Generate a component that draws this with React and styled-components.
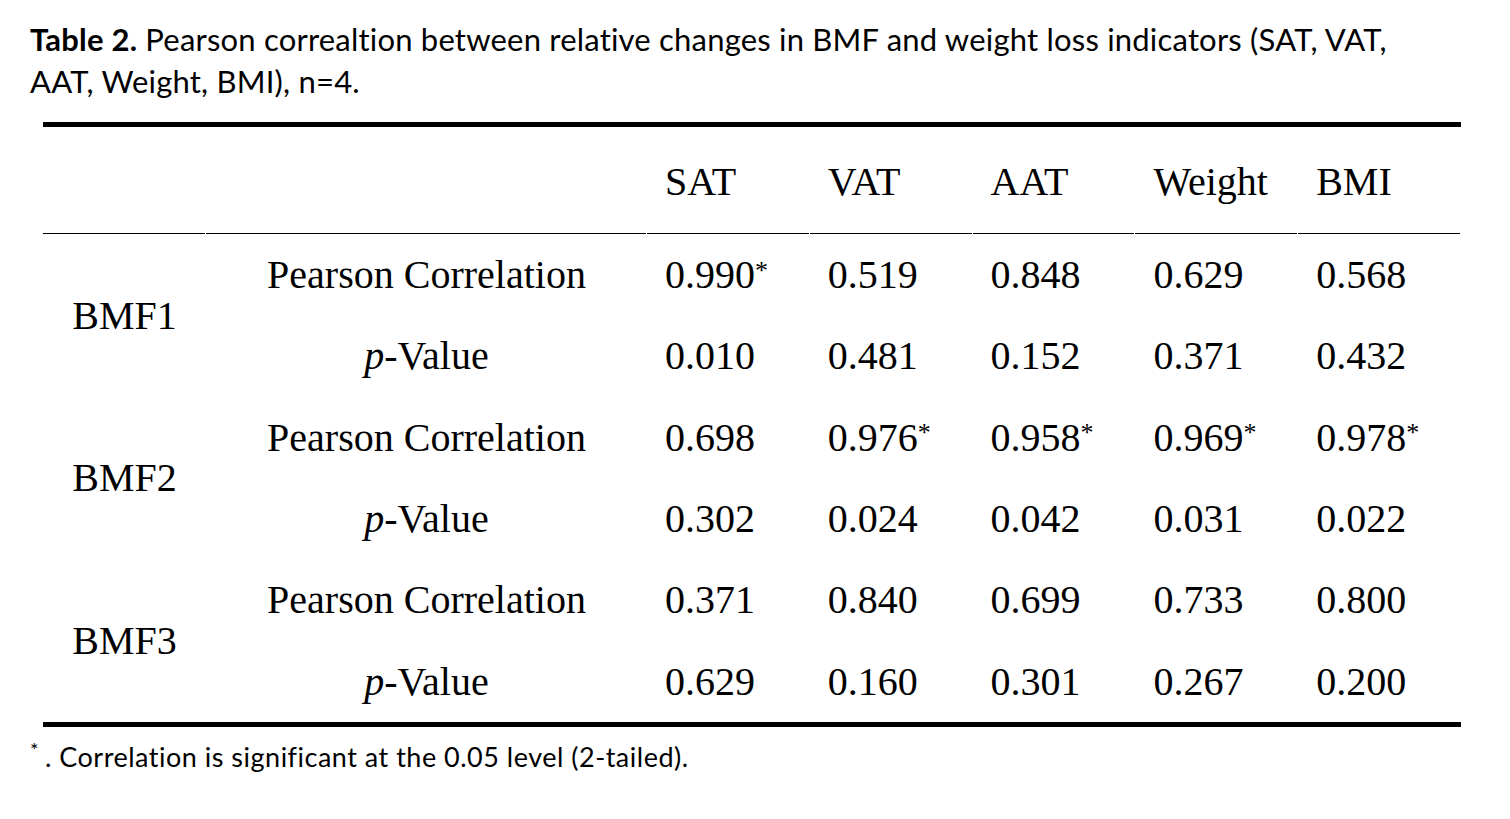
import React from 'react';
import styled, { createGlobalStyle } from 'styled-components';

const GlobalStyle = createGlobalStyle`
  body {
    margin: 0;
    background: #fff;
    color: #000;
  }
`

const PageSC = styled.div`
  width: 1510px;
  height: 819px;
  box-sizing: border-box;
  padding: 18px 0 0 30px;
`

const CaptionSC = styled.p`
  margin: 0;
  font-family: Lato, "Liberation Sans", sans-serif;
  font-size: 31px;
  line-height: 42px;
  letter-spacing: 0.2px;
`

const TableSC = styled.div`
  margin: 20px 0 0 13px;
  width: 1418px;
  display: grid;
  grid-template-columns: 163px 441px repeat(5, 1fr);
  border-top: 5px solid #000;
  border-bottom: 5px solid #000;
  font-family: "Liberation Serif", "Times New Roman", serif;
  font-size: 40px;
`

const HeadCellSC = styled.div`
  position: relative;
  height: 107px;
  display: flex;
  align-items: center;
  padding-left: 18px;
  padding-top: 2px;
  box-sizing: border-box;
  &::after {
    content: "";
    position: absolute;
    left: 0;
    right: 1px;
    bottom: 0;
    border-bottom: 1.5px solid #000;
  }
`

const GroupSC = styled.div`
  grid-row: span 2;
  display: flex;
  align-items: center;
  justify-content: center;
`

const LabelSC = styled.div`
  height: 81.3px;
  display: flex;
  align-items: center;
  justify-content: center;
`

const ValueSC = styled.div`
  height: 81.3px;
  display: flex;
  align-items: center;
  padding-left: 18px;
`

const StarSC = styled.sup`
  font-size: 26px;
  line-height: 0;
  position: relative;
  top: -4px;
`

const NoteSC = styled.p`
  margin: 10px 0 0;
  font-family: Lato, "Liberation Sans", sans-serif;
  font-size: 27px;
  letter-spacing: 0.5px;
  sup {
    font-size: 20px;
    vertical-align: 10px;
    margin-right: 6px;
  }
`

const headers = ["", "", "SAT", "VAT", "AAT", "Weight", "BMI"]

const groups = [
  {
    name: "BMF1",
    r: [["0.990", true], ["0.519"], ["0.848"], ["0.629"], ["0.568"]],
    p: ["0.010", "0.481", "0.152", "0.371", "0.432"],
  },
  {
    name: "BMF2",
    r: [["0.698"], ["0.976", true], ["0.958", true], ["0.969", true], ["0.978", true]],
    p: ["0.302", "0.024", "0.042", "0.031", "0.022"],
  },
  {
    name: "BMF3",
    r: [["0.371"], ["0.840"], ["0.699"], ["0.733"], ["0.800"]],
    p: ["0.629", "0.160", "0.301", "0.267", "0.200"],
  },
]

export default function App() {
  return (
    <PageSC>
      <GlobalStyle />
      <CaptionSC>
        <b>Table 2.</b> Pearson correaltion between relative changes in BMF and weight loss indicators (SAT, VAT,
        <br />
        AAT, Weight, BMI), n=4.
      </CaptionSC>
      <TableSC>
        {headers.map((h, i) => <HeadCellSC key={i}>{h}</HeadCellSC>)}
        {groups.map(g => (
          <React.Fragment key={g.name}>
            <GroupSC>{g.name}</GroupSC>
            <LabelSC>Pearson Correlation</LabelSC>
            {g.r.map(([v, sig], i) => (
              <ValueSC key={"r" + i}>{v}{sig && <StarSC>*</StarSC>}</ValueSC>
            ))}
            <LabelSC><i>p</i>-Value</LabelSC>
            {g.p.map((v, i) => <ValueSC key={"p" + i}>{v}</ValueSC>)}
          </React.Fragment>
        ))}
      </TableSC>
      <NoteSC><sup>*</sup>. Correlation is significant at the 0.05 level (2-tailed).</NoteSC>
    </PageSC>
  )
}
